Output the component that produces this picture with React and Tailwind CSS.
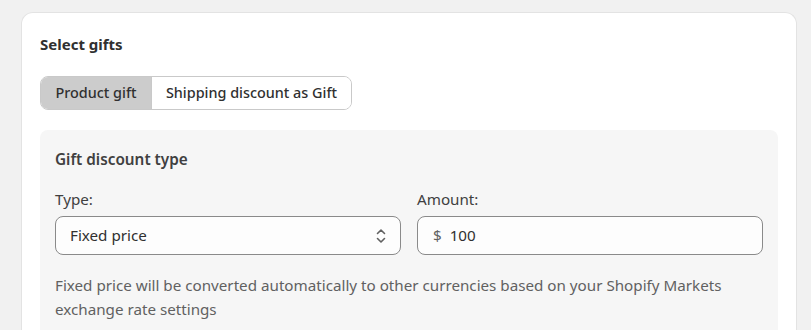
export default function App() {
  return (
    <div
      className="min-h-[330px] bg-[#f1f1f1] pl-[21px] pr-[14px] pt-[12px] overflow-hidden"
      style={{ fontFamily: '"Noto Sans", "Open Sans", sans-serif' }}
    >
      <div className="rounded-t-[12px] border border-[#e3e3e3] border-b-0 bg-white px-[18px] pt-[21px] pb-6 h-[330px]">
        <h2 className="text-[15px] font-bold leading-[20px] text-[#303030]">Select gifts</h2>

        <div className="mt-[22px] inline-flex h-[34px] rounded-[8px] border border-[#c9c9c9] overflow-hidden text-[14.4px] text-[#303030]">
          <button className="w-[110px] bg-[#cccccc] font-medium">Product gift</button>
          <button className="w-[200px] bg-white border-l border-[#c9c9c9] font-medium">
            Shipping discount as Gift
          </button>
        </div>

        <div className="mt-[20px] rounded-[8px] bg-[#f6f6f6] px-[15px] pt-[18px] pb-4">
          <h3 className="text-[15.3px] font-semibold leading-[22px] text-[#404040]">Gift discount type</h3>

          <div className="mt-[18px] grid grid-cols-2 gap-[16px]">
            <div>
              <label className="block text-[15.2px] leading-[22px] text-[#404040]">Type:</label>
              <div className="mt-[6px] flex h-[39px] items-center justify-between rounded-[8px] border border-[#8a8a8a] bg-[#fdfdfd] pl-[14px] pr-[12px] text-[15.2px] text-[#303030]">
                <span>Fixed price</span>
                <svg width="14" height="18" viewBox="0 0 14 18" fill="none" stroke="#616161" strokeWidth="1.6" strokeLinecap="round" strokeLinejoin="round">
                  <path d="M3.5 6.5 7 3l3.5 3.5" />
                  <path d="M3.5 11.5 7 15l3.5-3.5" />
                </svg>
              </div>
            </div>
            <div>
              <label className="block text-[15.2px] leading-[22px] text-[#404040]">Amount:</label>
              <div className="mt-[6px] flex h-[39px] items-center rounded-[8px] border border-[#8a8a8a] bg-[#fdfdfd] pl-[15px] text-[15.2px] text-[#303030]">
                <span className="text-[#616161] mr-[8px]">$</span>
                <span>100</span>
              </div>
            </div>
          </div>

          <p className="mt-[18px] text-[15.2px] leading-[24px] text-[#616161]">
            Fixed price will be converted automatically to other currencies based on your Shopify Markets
            <br />
            exchange rate settings
          </p>
        </div>
      </div>
    </div>
  );
}
